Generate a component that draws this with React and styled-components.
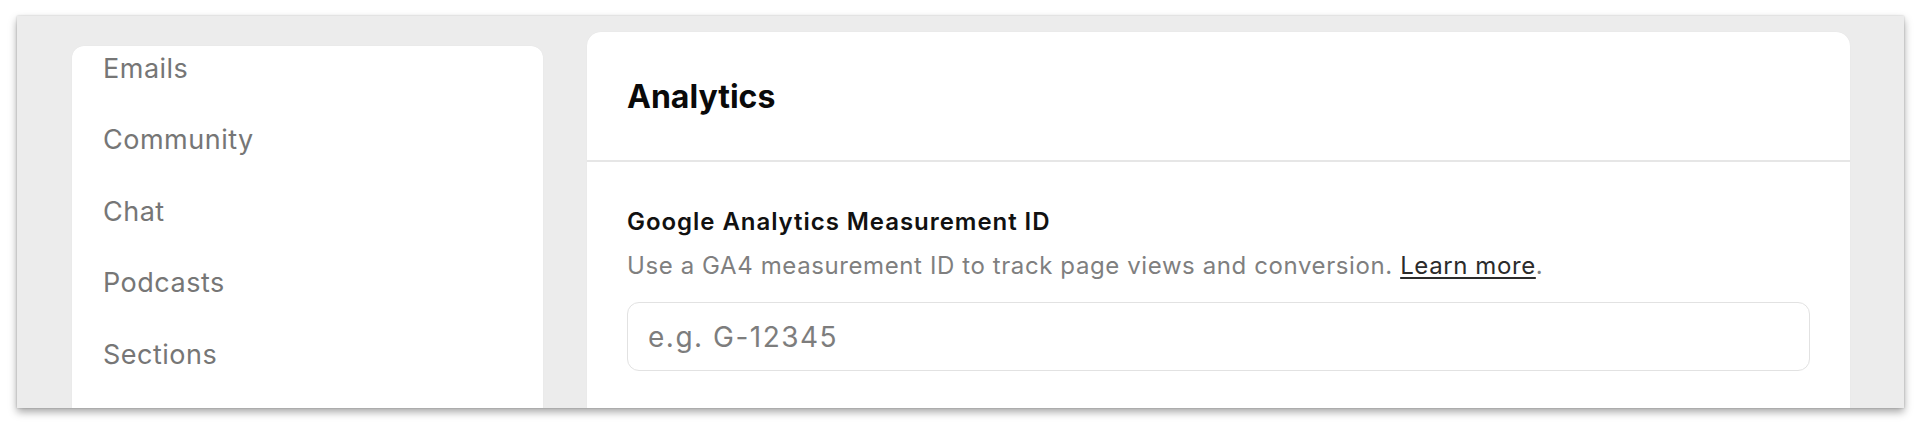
import React from "react";
import styled, { createGlobalStyle } from "styled-components";

const GlobalStyle = createGlobalStyle`
  html, body {
    margin: 0;
    padding: 0;
    background: #ffffff;
    font-family: Inter, "Noto Sans", "Liberation Sans", sans-serif;
  }
`;

const navItems = ["Emails", "Community", "Chat", "Podcasts", "Sections"];

const App = () => {
  return (
    <>
      <GlobalStyle />
      <Page>
        <Window>
          <Sidebar>
            <NavList>
              {navItems.map((item) => (
                <NavItem key={item}>{item}</NavItem>
              ))}
            </NavList>
          </Sidebar>
          <Panel>
            <PanelHeader>
              <Title>Analytics</Title>
            </PanelHeader>
            <PanelBody>
              <Label htmlFor="ga-id">Google Analytics Measurement ID</Label>
              <Hint>
                Use a GA4 measurement ID to track page views and conversion.{" "}
                <a href="#learn">Learn more</a>.
              </Hint>
              <Input id="ga-id" type="text" placeholder="e.g. G-12345" />
            </PanelBody>
          </Panel>
        </Window>
      </Page>
    </>
  );
};

const Page = styled.div`
  height: 426px;
  padding: 16px 16px 0 17px;
  box-sizing: border-box;
  overflow: hidden;
`;

const Window = styled.div`
  display: flex;
  align-items: flex-start;
  gap: 44px;
  height: 392px;
  padding: 0 54px 0 55px;
  box-sizing: border-box;
  background: #ececec;
  overflow: hidden;
  box-shadow: 0 4px 8px rgba(0, 0, 0, 0.35), 0 0 2px rgba(0, 0, 0, 0.2);
`;

const Sidebar = styled.nav`
  width: 471px;
  flex-shrink: 0;
  margin-top: 30px;
  height: 400px;
  background: #ffffff;
  border-radius: 12px 12px 0 0;
  box-shadow: 0 0 1px rgba(0, 0, 0, 0.08);
  overflow: hidden;
`;

const NavList = styled.ul`
  list-style: none;
  margin: -13px 0 0;
  padding: 0 0 0 31px;
`;

const NavItem = styled.li`
  height: 71.4px;
  line-height: 71px;
  font-size: 27px;
  color: #767676;
  letter-spacing: 0.5px;
`;

const Panel = styled.section`
  flex: 1;
  margin-top: 16px;
  height: 420px;
  background: #ffffff;
  border-radius: 14px 14px 0 0;
  box-shadow: 0 0 1px rgba(0, 0, 0, 0.08);
  overflow: hidden;
`;

const PanelHeader = styled.header`
  display: flex;
  align-items: center;
  height: 128px;
  padding: 0 40px;
  border-bottom: 2px solid #e6e6e6;
`;

const Title = styled.h1`
  margin: 0;
  font-size: 32px;
  font-weight: 700;
  color: #0a0a0a;
`;

const PanelBody = styled.div`
  display: flex;
  flex-direction: column;
  padding: 46px 40px 0;
`;

const Label = styled.label`
  font-size: 24px;
  line-height: 28px;
  font-weight: 600;
  color: #111111;
  letter-spacing: 0.95px;
`;

const Hint = styled.p`
  margin: 16px 0 22px;
  font-size: 24px;
  line-height: 28px;
  color: #7f7f7f;
  letter-spacing: 0.6px;

  a {
    color: #2b2b2b;
    text-decoration: underline;
    text-underline-offset: 3px;
  }
`;

const Input = styled.input`
  height: 69px;
  box-sizing: border-box;
  padding: 0 20px;
  border: 1.5px solid #e2e2e2;
  border-radius: 12px;
  font-family: inherit;
  font-size: 28px;
  letter-spacing: 1.5px;
  color: #222;
  outline: none;

  &::placeholder {
    color: #7d7d7d;
  }
`;

export default App;
